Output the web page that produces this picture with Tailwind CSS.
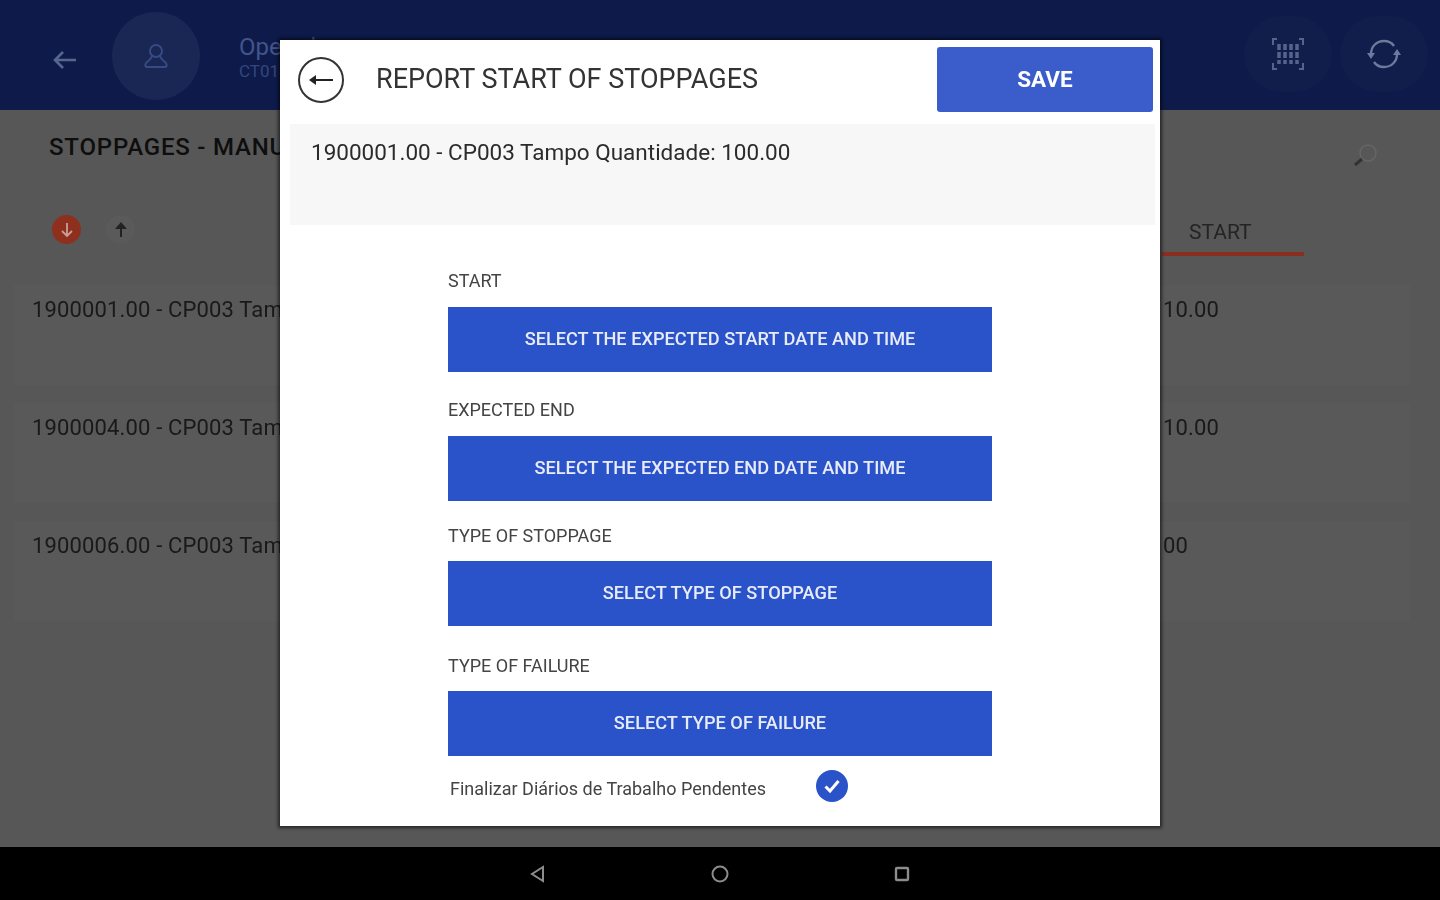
<!DOCTYPE html>
<html lang="en">
<head>
    <meta charset="UTF-8">
    <meta name="viewport" content="width=device-width, initial-scale=1.0">
    <title>Report start of stoppages</title>
    <script src="https://cdn.jsdelivr.net/npm/@tailwindcss/browser@4"></script>
</head>
<body class="bg-black overflow-hidden font-['Roboto',sans-serif]">
<div class="relative w-[1440px] h-[900px] flex flex-col overflow-hidden blur-[0.6px]">

    <!-- page behind the dialog -->
    <header class="h-[110px] shrink-0 bg-[#0e1b4a] flex items-center pl-[52px] pr-[12px]">
        <svg class="w-[26px] h-[26px] mt-[10px]" viewBox="0 0 26 26" fill="none" stroke="#55678f" stroke-width="2.600"><path d="M24 13H3M11 5l-8 8 8 8"/></svg>
        <div class="ml-[34px] mt-[2px] w-[88px] h-[88px] rounded-full bg-white/5 flex items-center justify-center">
            <svg class="w-[26px] h-[26px]" viewBox="0 0 26 26" fill="none" stroke="#364a84" stroke-width="2"><circle cx="13" cy="8" r="6"/><path d="M9 13c-1 4-4 5-6 7-1 2-1 4 1 4h18c2 0 2-2 1-4-2-2-5-3-6-7"/></svg>
        </div>
        <div class="ml-[39px] mt-[6px] flex flex-col">
            <span class="text-[24px] leading-[26px] text-[#42558a]">Operador</span>
            <span class="text-[17px] leading-[22px] text-[#33467e]">CT01</span>
        </div>
        <div class="ml-auto mt-[-2px] flex items-center gap-[8px]">
            <div class="w-[88px] h-[76px] rounded-full bg-white/[0.015] flex items-center justify-center">
                <svg class="w-[34px] h-[34px]" viewBox="0 0 34 34" fill="none" stroke="#55648a" stroke-width="2"><path d="M2 8V2h4M28 2h4v6M2 26v6h4M32 26v6h-4"/><path stroke-width="3.500" stroke-dasharray="6 2" d="M8 7v20M14 7v20M20 7v20M26 7v20"/></svg>
            </div>
            <div class="w-[88px] h-[76px] rounded-full bg-white/[0.015] flex items-center justify-center">
                <svg class="w-[34px] h-[32px]" viewBox="0 0 34 32" fill="none" stroke="#6c7a9c" stroke-width="2.400"><path d="M4 16C4 8 10 3 17 3c4 0 8 2 10 5M30 16c0 8-6 13-13 13-4 0-8-2-10-5"/><path fill="#6c7a9c" stroke="none" d="M0 15h8l-4 6zM26 17h8l-4-6z"/></svg>
            </div>
        </div>
    </header>

    <main class="flex-1 bg-[#575757] flex flex-col">
        <div class="h-[74px] flex items-center justify-between pl-[49px] pr-[60px]">
            <span class="text-[24px] font-medium tracking-[0.8px] text-[#0e0e0e]">STOPPAGES - MANUAL</span>
            <svg class="w-[28px] h-[28px] mt-[16px]" viewBox="0 0 28 28" fill="none" stroke="#333" stroke-width="1.500"><circle cx="16" cy="12" r="8" stroke="#666"/><path stroke-width="3" d="M10 18l-7 6"/></svg>
        </div>
        <div class="h-[101px] flex items-start pl-[52px] pr-[136px] pt-[31px]">
            <div class="w-[29px] h-[29px] rounded-full bg-[#8f2f1e] flex items-center justify-center">
                <svg class="w-[14px] h-[16px]" viewBox="0 0 14 16" fill="none" stroke="#c9a097" stroke-width="1.800"><path d="M7 1v13M2 9l5 5 5-5"/></svg>
            </div>
            <div class="ml-[25px] w-[29px] h-[29px] rounded-full bg-[#5a5a5a] flex items-center justify-center">
                <svg class="w-[12px] h-[16px]" viewBox="0 0 12 16" fill="#222" stroke="#222" stroke-width="2"><path d="M6 15V3"/><path stroke="none" d="M6 0l6 7H0z"/></svg>
            </div>
            <div class="ml-auto mt-[5px] w-[142px] h-[36px] border-b-[4px] border-[#8a2f20] text-[21px] leading-[25px] text-[#242424] pl-[27px]">START</div>
        </div>
        <div class="flex flex-col gap-[18px] pl-[14px] pr-[30px]">
            <div class="h-[100px] bg-[#595959] flex items-start pl-[18px] pt-[11px] text-[22px] tracking-[0.15px] leading-[28px] text-[#191919]">
                <span class="w-[1131px]">1900001.00 - CP003 Tampo</span><span>10.00</span>
            </div>
            <div class="h-[100px] bg-[#595959] flex items-start pl-[18px] pt-[11px] text-[22px] tracking-[0.15px] leading-[28px] text-[#191919]">
                <span class="w-[1131px]">1900004.00 - CP003 Tampo</span><span>10.00</span>
            </div>
            <div class="h-[100px] bg-[#595959] flex items-start pl-[18px] pt-[11px] text-[22px] tracking-[0.15px] leading-[28px] text-[#191919]">
                <span class="w-[1131px]">1900006.00 - CP003 Tampo</span><span>00</span>
            </div>
        </div>
    </main>

    <!-- android nav bar -->
    <footer class="h-[53px] shrink-0 bg-black flex items-center justify-center gap-[162px]">
        <svg class="w-[20px] h-[20px]" viewBox="0 0 20 20" fill="none" stroke="#8c8c8c" stroke-width="2"><path d="M15 3v14L4 10z"/></svg>
        <svg class="w-[20px] h-[20px]" viewBox="0 0 20 20" fill="none" stroke="#8c8c8c" stroke-width="2"><circle cx="10" cy="10" r="7.500"/></svg>
        <svg class="w-[20px] h-[20px]" viewBox="0 0 20 20" fill="none" stroke="#8c8c8c" stroke-width="2.400"><rect x="4" y="4" width="12" height="12" rx="1"/></svg>
    </footer>

    <!-- dialog -->
    <div class="absolute left-[280px] top-[40px] w-[880px] h-[786px] bg-white shadow-[0_0_3px_2px_rgba(0,0,0,0.55)] flex flex-col">
        <div class="h-[84px] shrink-0 flex items-start pl-[18px] pr-[7px]">
            <div class="mt-[17px] w-[46px] h-[46px] rounded-full border-2 border-[#333] flex items-center justify-center">
                <svg class="w-[26px] h-[16px]" viewBox="0 0 26 16" fill="none" stroke="#222" stroke-width="2"><path d="M25 8H3"/><path fill="#222" stroke="none" d="M1 8l7-5v10z"/></svg>
            </div>
            <h1 class="ml-[32px] mt-[22px] text-[27px] leading-[34px] text-[#333]">REPORT START OF STOPPAGES</h1>
            <button class="ml-auto mt-[7px] w-[216px] h-[65px] rounded-[3px] bg-[#3b5ccb] text-white text-[22.500px] font-bold">SAVE</button>
        </div>
        <div class="mx-[10px] w-[865px] h-[101px] shrink-0 bg-[#f7f7f7] pl-[21px] pt-[14px] text-[22.500px] leading-[29px] text-[#2b2b2b]">1900001.00 - CP003 Tampo Quantidade: 100.00</div>

        <div class="w-[544px] ml-[168px] flex flex-col">
            <label class="mt-[45px] h-[22px] text-[18px] leading-[22px] text-[#444]">START</label>
            <button class="mt-[15px] h-[65px] pb-[1px] bg-[#2a52c9] text-[#e8ecf8] text-[18.200px] font-medium">SELECT THE EXPECTED START DATE AND TIME</button>
            <label class="mt-[27px] h-[22px] text-[18px] leading-[22px] text-[#444]">EXPECTED END</label>
            <button class="mt-[15px] h-[65px] pb-[2px] bg-[#2a52c9] text-[#e8ecf8] text-[18.200px] font-medium">SELECT THE EXPECTED END DATE AND TIME</button>
            <label class="mt-[24px] h-[22px] text-[18px] leading-[22px] text-[#444]">TYPE OF STOPPAGE</label>
            <button class="mt-[14px] h-[65px] pb-[2px] bg-[#2a52c9] text-[#e8ecf8] text-[18.200px] font-medium">SELECT TYPE OF STOPPAGE</button>
            <label class="mt-[29px] h-[22px] text-[18px] leading-[22px] text-[#444]">TYPE OF FAILURE</label>
            <button class="mt-[14px] h-[65px] pb-[2px] bg-[#2a52c9] text-[#e8ecf8] text-[18.200px] font-medium">SELECT TYPE OF FAILURE</button>
            <div class="mt-[14px] flex items-center pl-[2px]">
                <span class="w-[366px] mt-[6px] text-[18px] leading-[22px] text-[#444]">Finalizar Diários de Trabalho Pendentes</span>
                <svg class="w-[32px] h-[32px]" viewBox="0 0 32 32"><circle cx="16" cy="16" r="16" fill="#2a52c9"/><path d="M9.500 16.500l4.500 4.500 8.500-10" fill="none" stroke="#fff" stroke-width="3"/></svg>
            </div>
        </div>
    </div>
</div>
</body>
</html>
